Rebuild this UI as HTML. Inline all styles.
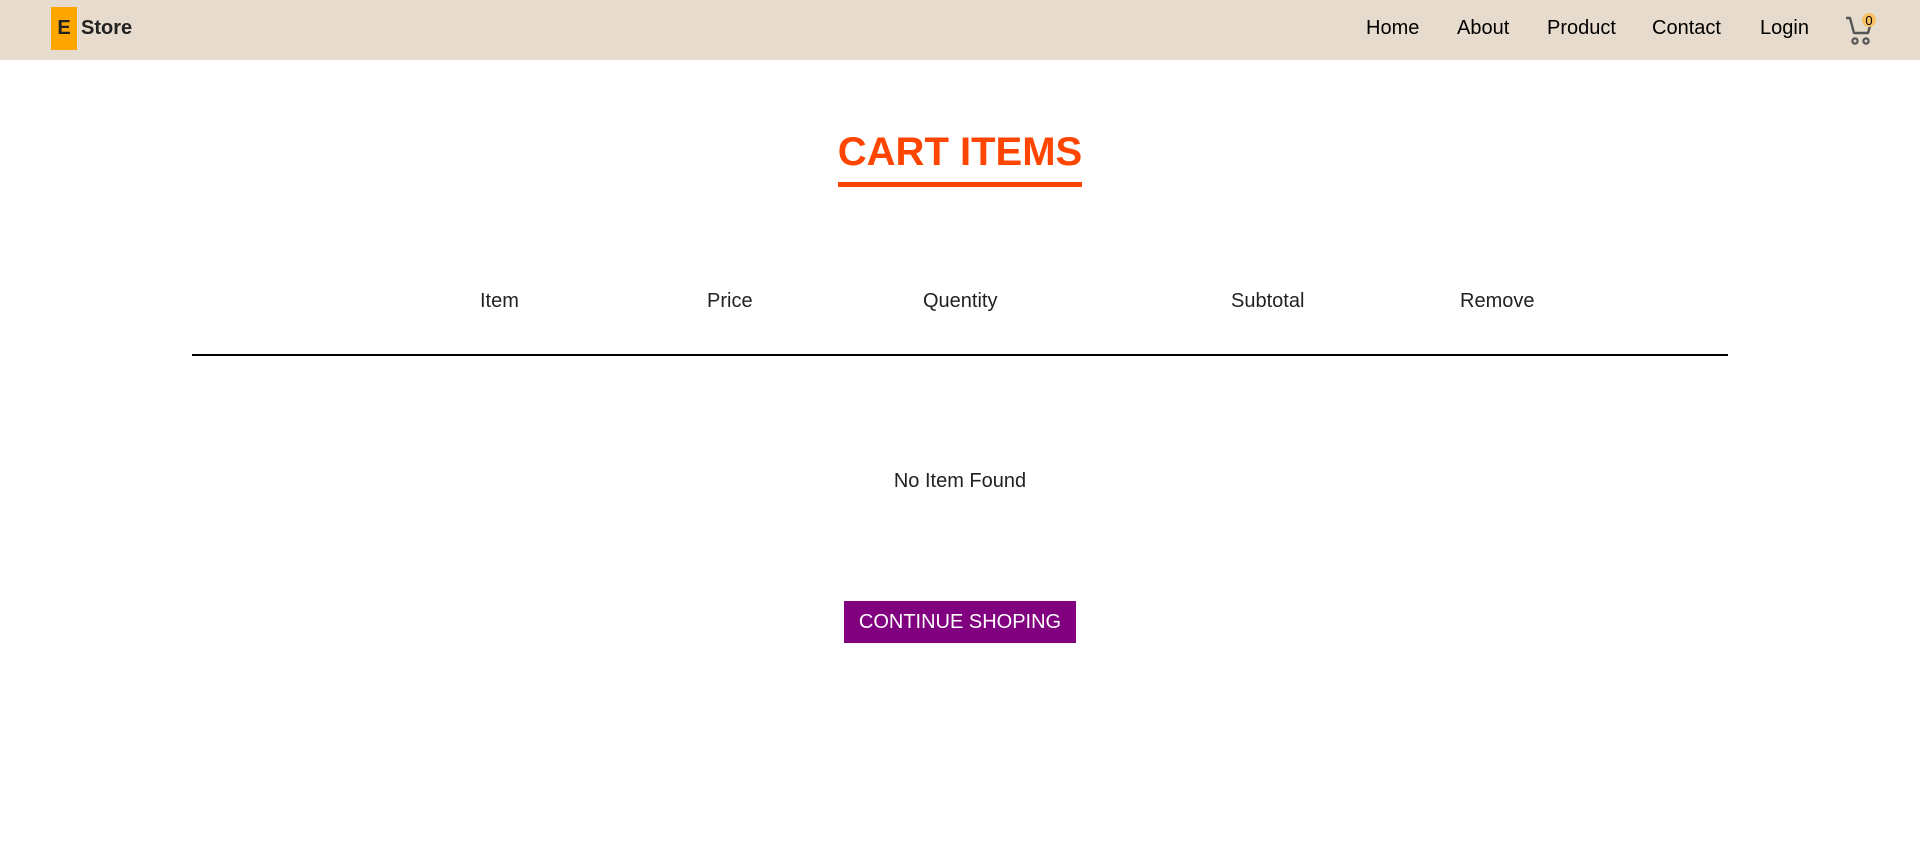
<!DOCTYPE html>
<html><head><meta charset="utf-8"><style>
*{margin:0;padding:0;box-sizing:border-box}
body{width:1920px;height:861px;background:#fff;font-family:"Liberation Sans",Arial,sans-serif;position:relative;overflow:hidden}
.hdr{position:absolute;left:0;top:0;width:1920px;height:60px;background:#e6dbcc}
.ebox{position:absolute;left:51px;top:7px;width:26px;height:43px;background:#ffa500;color:#222;font-weight:bold;font-size:20px;text-align:center;line-height:43px}
.store{position:absolute;left:81px;top:17px;font-weight:bold;font-size:20px;color:#222}
.nav{position:absolute;top:17px;font-size:20px;color:#000}
.t{position:absolute;font-size:20px;color:#222}
</style></head><body>
<div class="hdr">
<div class="ebox">E</div><div class="store">Store</div>
<span class="nav" style="left:1366px">Home</span>
<span class="nav" style="left:1457px">About</span>
<span class="nav" style="left:1547px">Product</span>
<span class="nav" style="left:1652px">Contact</span>
<span class="nav" style="left:1760px">Login</span>
<svg style="position:absolute;left:1840px;top:10px" width="40" height="40" viewBox="0 0 40 40">
<path d="M6 8 H10 L14 23 H28 L30 16" fill="none" stroke="#555" stroke-width="2.4" stroke-linejoin="round"/>
<circle cx="15" cy="31" r="2.6" fill="none" stroke="#555" stroke-width="2.2"/>
<circle cx="26" cy="31" r="2.6" fill="none" stroke="#555" stroke-width="2.2"/>
<circle cx="29" cy="10" r="7" fill="#f8c060"/>
<text x="29" y="15" font-size="13" text-anchor="middle" fill="#000" font-family="Liberation Sans">0</text>
</svg>
</div>
<div style="position:absolute;left:818px;top:128px;width:284px;text-align:center;font-size:40px;font-weight:bold;color:#ff4500;line-height:48px">CART ITEMS</div>
<div style="position:absolute;left:838px;top:182px;width:244px;height:5px;background:#ff4500"></div>
<span class="t" style="left:480px;top:290px">Item</span>
<span class="t" style="left:707px;top:290px">Price</span>
<span class="t" style="left:923px;top:290px">Quentity</span>
<span class="t" style="left:1231px;top:290px">Subtotal</span>
<span class="t" style="left:1460px;top:290px">Remove</span>
<div style="position:absolute;left:192px;top:354px;width:1536px;height:2px;background:#000"></div>
<div class="t" style="left:0;width:1920px;text-align:center;top:470px;color:#222">No Item Found</div>
<div style="position:absolute;left:844px;top:601px;width:232px;height:42px;background:#800080;color:#fff;font-size:20px;text-align:center;line-height:42px">CONTINUE SHOPING</div>
</body></html>
